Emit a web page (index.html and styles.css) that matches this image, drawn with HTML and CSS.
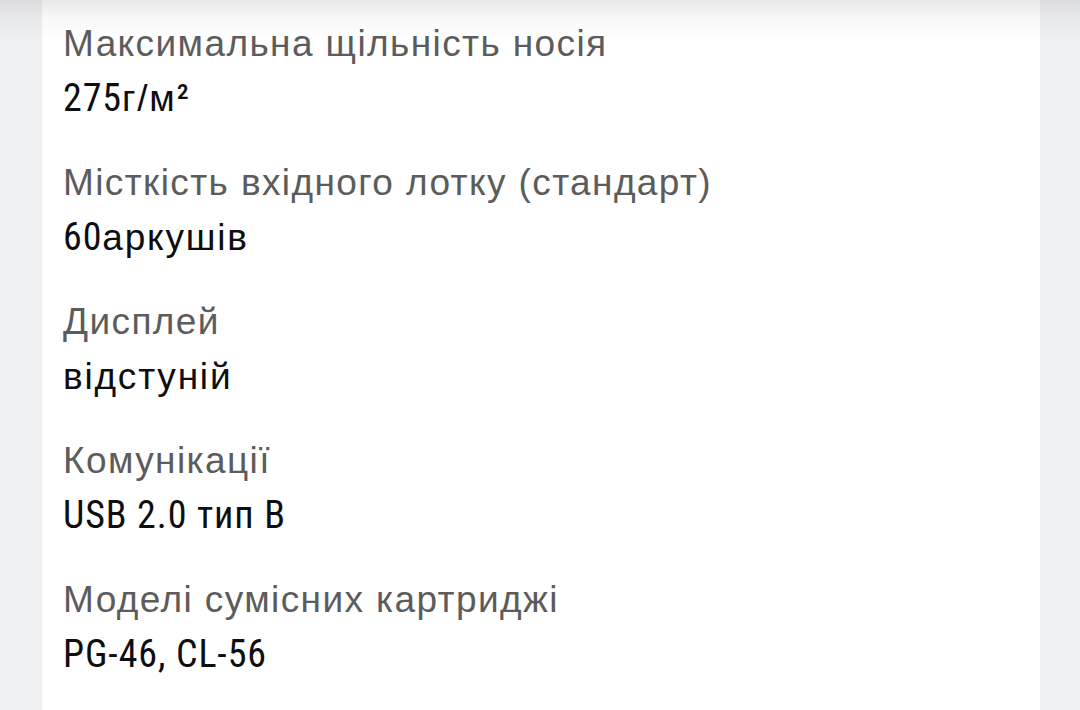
FILE: index.html
```html
<!DOCTYPE html>
<html lang="uk">
<head>
<meta charset="utf-8">
<title>Характеристики</title>
<link rel="stylesheet" href="styles.css">
</head>
<body>
<div class="page">
  <section class="card">
    <div class="spec">
      <div class="label">Максимальна щільність носія</div>
      <div class="value"><span class="lat">275</span>г/м<span class="lat">²</span></div>
    </div>
    <div class="spec">
      <div class="label">Місткість вхідного лотку (стандарт)</div>
      <div class="value"><span class="lat">60</span>аркушів</div>
    </div>
    <div class="spec">
      <div class="label">Дисплей</div>
      <div class="value">відстуній</div>
    </div>
    <div class="spec">
      <div class="label">Комунікації</div>
      <div class="value"><span class="lat">USB 2.0 тип B</span></div>
    </div>
    <div class="spec">
      <div class="label">Моделі сумісних картриджі</div>
      <div class="value"><span class="lat">PG-46, CL-56</span></div>
    </div>
  </section>
  <div class="shade"></div>
</div>
</body>
</html>
```

FILE: styles.css
```css
html, body {
  margin: 0;
  padding: 0;
  height: 100%;
  overflow: hidden;
  background: #eff0f2;
}

.page {
  position: relative;
  height: 710px;
  display: flex;
}

.card {
  margin-left: 42px;
  width: 998px;
  background: #ffffff;
  padding: 16px 0 0 21px;
  box-sizing: border-box;
  display: flex;
  flex-direction: column;
  gap: 29px;
}

.spec {
  display: flex;
  flex-direction: column;
}

.label {
  font-family: "Liberation Sans", Arial, sans-serif;
  font-size: 37px;
  line-height: 55px;
  letter-spacing: 1.4px;
  color: #5c5c5c;
  white-space: nowrap;
}

.value {
  font-family: "Liberation Sans", Arial, sans-serif;
  font-size: 37px;
  line-height: 55px;
  letter-spacing: 1.8px;
  color: #0e0e11;
  white-space: nowrap;
}

.lat {
  font-family: "Roboto", "Liberation Sans", sans-serif;
  font-stretch: condensed;
  font-size: 38px;
  letter-spacing: 0.9px;
}

.shade {
  position: absolute;
  left: 0;
  right: 0;
  top: 0;
  height: 42px;
  background: linear-gradient(to bottom, rgba(0, 0, 0, 0.09), rgba(0, 0, 0, 0.03) 40%, rgba(0, 0, 0, 0));
  pointer-events: none;
}
```
